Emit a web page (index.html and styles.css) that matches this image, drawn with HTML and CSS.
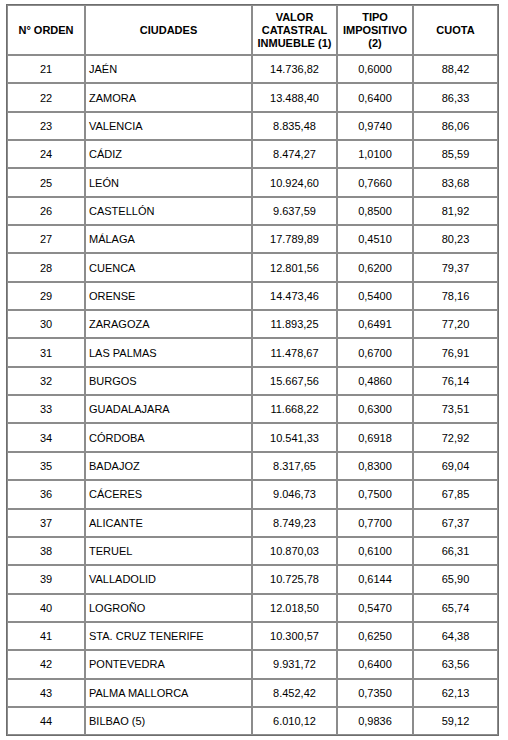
FILE: index.html
```
<!DOCTYPE html>
<html lang="es">
<head>
<meta charset="utf-8">
<title>Cuotas</title>
<link rel="stylesheet" href="styles.css">
</head>
<body>
<div class="wrap">
<table class="tabla">
<colgroup>
<col class="c1"><col class="c2"><col class="c3"><col class="c4"><col class="c5">
</colgroup>
<thead>
<tr class="head">
<th>N° ORDEN</th>
<th>CIUDADES</th>
<th>VALOR<br>CATASTRAL<br>INMUEBLE (1)</th>
<th>TIPO<br>IMPOSITIVO<br>(2)</th>
<th>CUOTA</th>
</tr>
</thead>
<tbody>
<tr><td class="n">21</td><td class="city">JAÉN</td><td class="n">14.736,82</td><td class="n">0,6000</td><td class="n">88,42</td></tr>
<tr><td class="n">22</td><td class="city">ZAMORA</td><td class="n">13.488,40</td><td class="n">0,6400</td><td class="n">86,33</td></tr>
<tr><td class="n">23</td><td class="city">VALENCIA</td><td class="n">8.835,48</td><td class="n">0,9740</td><td class="n">86,06</td></tr>
<tr><td class="n">24</td><td class="city">CÁDIZ</td><td class="n">8.474,27</td><td class="n">1,0100</td><td class="n">85,59</td></tr>
<tr><td class="n">25</td><td class="city">LEÓN</td><td class="n">10.924,60</td><td class="n">0,7660</td><td class="n">83,68</td></tr>
<tr><td class="n">26</td><td class="city">CASTELLÓN</td><td class="n">9.637,59</td><td class="n">0,8500</td><td class="n">81,92</td></tr>
<tr><td class="n">27</td><td class="city">MÁLAGA</td><td class="n">17.789,89</td><td class="n">0,4510</td><td class="n">80,23</td></tr>
<tr><td class="n">28</td><td class="city">CUENCA</td><td class="n">12.801,56</td><td class="n">0,6200</td><td class="n">79,37</td></tr>
<tr><td class="n">29</td><td class="city">ORENSE</td><td class="n">14.473,46</td><td class="n">0,5400</td><td class="n">78,16</td></tr>
<tr><td class="n">30</td><td class="city">ZARAGOZA</td><td class="n">11.893,25</td><td class="n">0,6491</td><td class="n">77,20</td></tr>
<tr><td class="n">31</td><td class="city">LAS PALMAS</td><td class="n">11.478,67</td><td class="n">0,6700</td><td class="n">76,91</td></tr>
<tr><td class="n">32</td><td class="city">BURGOS</td><td class="n">15.667,56</td><td class="n">0,4860</td><td class="n">76,14</td></tr>
<tr><td class="n">33</td><td class="city">GUADALAJARA</td><td class="n">11.668,22</td><td class="n">0,6300</td><td class="n">73,51</td></tr>
<tr><td class="n">34</td><td class="city">CÓRDOBA</td><td class="n">10.541,33</td><td class="n">0,6918</td><td class="n">72,92</td></tr>
<tr><td class="n">35</td><td class="city">BADAJOZ</td><td class="n">8.317,65</td><td class="n">0,8300</td><td class="n">69,04</td></tr>
<tr><td class="n">36</td><td class="city">CÁCERES</td><td class="n">9.046,73</td><td class="n">0,7500</td><td class="n">67,85</td></tr>
<tr><td class="n">37</td><td class="city">ALICANTE</td><td class="n">8.749,23</td><td class="n">0,7700</td><td class="n">67,37</td></tr>
<tr><td class="n">38</td><td class="city">TERUEL</td><td class="n">10.870,03</td><td class="n">0,6100</td><td class="n">66,31</td></tr>
<tr><td class="n">39</td><td class="city">VALLADOLID</td><td class="n">10.725,78</td><td class="n">0,6144</td><td class="n">65,90</td></tr>
<tr><td class="n">40</td><td class="city">LOGROÑO</td><td class="n">12.018,50</td><td class="n">0,5470</td><td class="n">65,74</td></tr>
<tr><td class="n">41</td><td class="city">STA. CRUZ TENERIFE</td><td class="n">10.300,57</td><td class="n">0,6250</td><td class="n">64,38</td></tr>
<tr><td class="n">42</td><td class="city">PONTEVEDRA</td><td class="n">9.931,72</td><td class="n">0,6400</td><td class="n">63,56</td></tr>
<tr><td class="n">43</td><td class="city">PALMA MALLORCA</td><td class="n">8.452,42</td><td class="n">0,7350</td><td class="n">62,13</td></tr>
<tr><td class="n">44</td><td class="city">BILBAO (5)</td><td class="n">6.010,12</td><td class="n">0,9836</td><td class="n">59,12</td></tr>
</tbody>
</table>
</div>
</body>
</html>
```
FILE: styles.css
```
html, body {
  margin: 0;
  padding: 0;
  background: #ffffff;
}
.wrap {
  padding: 4px 0 0 6px;
}
.tabla {
  border-collapse: separate;
  border-spacing: 0;
  border: 1px solid #6e6e6e;
  table-layout: fixed;
  width: 491px;
  font-family: "Liberation Sans", Arial, sans-serif;
  font-size: 11px;
  color: #000000;
}
.c1 { width: 78px; }
.c2 { width: 167px; }
.c3 { width: 85px; }
.c4 { width: 76px; }
.c5 { width: 85px; }
.tabla th,
.tabla td {
  border: 1px solid #8c8c8c;
  padding: 0 2px;
  vertical-align: middle;
}
.tabla th {
  font-weight: bold;
  text-align: center;
  line-height: 13px;
}
.head th {
  height: 50px;
  box-sizing: border-box;
}
.tabla tbody tr {
  height: 28.35px;
}
.tabla td.n {
  text-align: center;
}
.tabla td.city {
  text-align: left;
  padding-left: 3px;
}
```
